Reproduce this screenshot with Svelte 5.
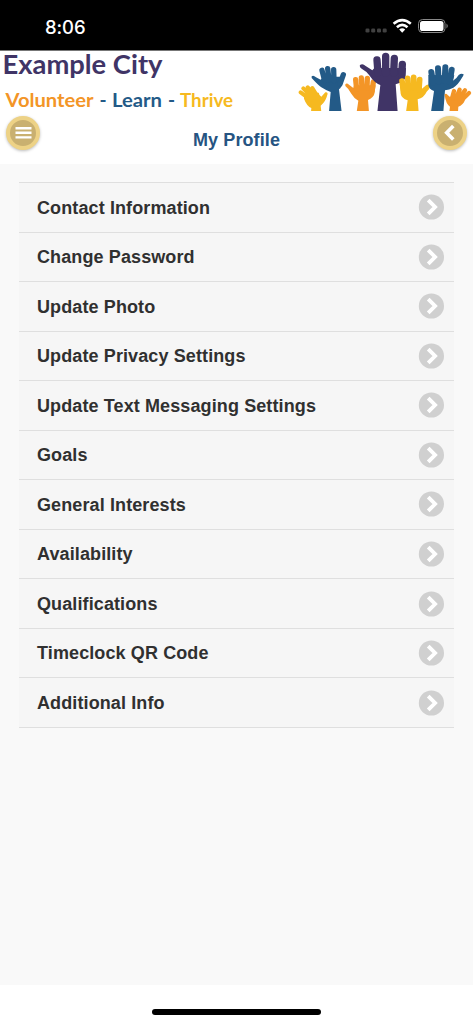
<script>
  const items = [
    'Contact Information',
    'Change Password',
    'Update Photo',
    'Update Privacy Settings',
    'Update Text Messaging Settings',
    'Goals',
    'General Interests',
    'Availability',
    'Qualifications',
    'Timeclock QR Code',
    'Additional Info'
  ];

  const hands = [
    {
      color: '#f6b920', width: 12,
      fingers: 'M14 133L44 156M22 121L50 150M35 118L58 148M49 120L66 148',
      palm: 'M24 144L40 132L68 134Q70 144 76 146L88 133Q94 132 95 137Q90 156 82 165L74 173L76 192H45L46 180Q32 174 24 152Z'
    },
    {
      color: '#235a87', width: 16,
      fingers: 'M78 67L86 98M95 62L99 95M113 65L114 98M142 80L132 108',
      palm: 'M47 85Q52 80 60 88L74 95L82 86H132L142 92L137 111Q135 120 129 124L137 192H99L104 132Q88 126 76 118Q66 111 47 90Z'
    },
    {
      color: '#f39527', width: 16,
      fingers: 'M179 95L182 124M196 90L198 120M214 91L213 120M232 102L228 130',
      palm: 'M148 109Q152 104 159 110L172 120L174 112H239L235 138Q232 149 216 156L219 192H182L187 158Q174 151 166 137Q158 122 148 114Z'
    },
    {
      color: '#403466', width: 22,
      fingers: 'M243 36L246 75M269 25L269 75M295 31L293 75M319 49L317 84',
      palm: 'M192 51Q200 45 209 54L229 67L235 60H330L328 89Q324 101 299 109L305 192H244L253 111Q235 104 221 83Q211 70 195 61Q190 57 192 51Z'
    },
    {
      color: '#f6b920', width: 17,
      fingers: 'M318 99L323 127M335 91L338 122M353 88L354 120M371 95L369 125',
      palm: 'M311 107L378 108V122L391 111Q400 107 403 113Q402 121 392 131Q384 149 365 154L368 192H330L335 157Q316 150 314 137Z'
    },
    {
      color: '#235a87', width: 18,
      fingers: 'M406 72L411 104M426 61L428 100M448 58L446 99M467 65L461 102',
      palm: 'M397 81L475 82L471 98Q481 93 488 81Q496 75 503 79Q502 86 497 91Q486 111 472 119Q459 125 447 127L442 192H405L414 129Q399 124 397 111Z'
    },
    {
      color: '#f39527', width: 13,
      fingers: 'M474 129L468 151M491 125L480 151M507 127L488 153M519 135L493 160',
      palm: 'M446 139Q450 134 455 141L463 148L469 136L507 142L506 158Q501 170 487 176L486 192H460L462 176Q450 169 446 142Z'
    }
  ];
</script>

<div class="screen">
  <div class="status">
    <span class="time">8:06</span>
    <svg class="indicators" width="84" height="20" viewBox="0 0 84 20">
      <g fill="#414141">
        <rect x="0.5" y="12.5" width="4" height="4" rx="1.3" />
        <rect x="6.2" y="12.5" width="4" height="4" rx="1.3" />
        <rect x="12" y="12.5" width="4" height="4" rx="1.3" />
        <rect x="17.7" y="12.5" width="4" height="4" rx="1.3" />
      </g>
      <g fill="none" stroke="#fff" stroke-width="2.6">
        <path d="M28.6 7.8Q37.2 0.4 45.8 7.8" />
        <path d="M31.9 11.2Q37.2 6.4 42.5 11.2" />
      </g>
      <path d="M34.2 13.6Q37.2 11 40.2 13.6L37.2 16.8Z" fill="#fff" />
      <rect x="53.5" y="3.5" width="26.5" height="13" rx="4" fill="none" stroke="#888" />
      <rect x="55" y="5" width="23.5" height="10" rx="2.6" fill="#fff" />
      <path d="M81.5 7.5Q84 10 81.5 12.5Z" fill="#888" />
    </svg>
  </div>

  <header>
    <div class="banner">
      <svg class="brand" width="240" height="60" viewBox="0 0 240 60">
        <text x="2.5" y="22.5" class="city" textLength="160" lengthAdjust="spacingAndGlyphs">Example City</text>
        <text x="5.5" y="56" class="motto orange" textLength="88" lengthAdjust="spacingAndGlyphs">Volunteer</text>
        <text x="99.5" y="56" class="motto blue">-</text>
        <text x="112" y="56" class="motto blue" textLength="50" lengthAdjust="spacingAndGlyphs">Learn</text>
        <text x="168" y="56" class="motto blue">-</text>
        <text x="180" y="56" class="motto yellow" textLength="53" lengthAdjust="spacingAndGlyphs">Thrive</text>
      </svg>
      <svg class="hands" width="175" height="60" viewBox="6 9 525 180">
        {#each hands as hand}
          <path d={hand.palm} fill={hand.color} />
          <path d={hand.fingers} fill="none" stroke={hand.color} stroke-width={hand.width} stroke-linecap="round" />
        {/each}
      </svg>
    </div>
    <div class="toolbar">
      <button class="round" aria-label="Menu">
        <svg width="25" height="25" viewBox="0 0 25 25">
          <path d="M4.5 7.2H20.5M4.5 11.8H20.5M4.5 16.4H20.5" stroke="#fff" stroke-width="2.4" />
        </svg>
      </button>
      <h1>My Profile</h1>
      <button class="round" aria-label="Back">
        <svg width="25" height="25" viewBox="0 0 25 25">
          <path d="M15.3 5L8.7 11.8L15.3 18.6" fill="none" stroke="#fff" stroke-width="3.6" />
        </svg>
      </button>
    </div>
  </header>

  <main>
    <ul>
      {#each items as item}
        <li>
          <span>{item}</span>
          <svg width="26" height="26" viewBox="0 0 26 26">
            <circle cx="13.4" cy="13" r="12.6" fill="#d0d0d0" />
            <path d="M10.2 6.1L17.1 13L10.2 19.9" fill="none" stroke="#fff" stroke-width="3.8" />
          </svg>
        </li>
      {/each}
    </ul>
  </main>

  <footer><div class="home"></div></footer>
</div>

<style>
  :global(body) { margin: 0; }
  .screen {
    width: 473px;
    height: 1024px;
    display: flex;
    flex-direction: column;
    overflow: hidden;
    background: #fff;
    font-family: "Liberation Sans", Arial, sans-serif;
  }
  .status {
    height: 50px;
    flex: none;
    box-sizing: border-box;
    padding: 16px 24px 0 45px;
    display: flex;
    justify-content: space-between;
    background: #000;
  }
  .time {
    color: #fff;
    font: 500 18.5px/22px Inter, sans-serif;
    letter-spacing: -0.1px;
  }
  .indicators { display: block; }
  header {
    height: 114px;
    flex: none;
    box-sizing: border-box;
    border-top: 1px solid #777;
    background: #fff;
  }
  .banner {
    height: 60px;
    display: flex;
    justify-content: space-between;
  }
  .brand { overflow: visible; }
  .city { font: 700 26px Lato, sans-serif; fill: #403466; }
  .motto { font: 700 19px Lato, sans-serif; }
  .orange { fill: #f39527; }
  .blue { fill: #235a87; }
  .yellow { fill: #f6b920; }
  .toolbar {
    height: 53px;
    box-sizing: border-box;
    padding: 5px 6px 0;
    display: flex;
    justify-content: space-between;
    align-items: flex-start;
  }
  h1 {
    margin: 14px 0 0;
    color: #265482;
    font-size: 18px;
    line-height: 21px;
    letter-spacing: 0.1px;
  }
  .round {
    width: 34px;
    height: 34px;
    padding: 0;
    display: grid;
    place-items: center;
    box-sizing: border-box;
    border: 4.5px solid #edd286;
    border-radius: 50%;
    background: #c9b070;
    box-shadow: 0 1px 3px #0004;
  }
  main {
    flex: 1;
    padding: 18px 19px 0;
    background: #f9f9f9;
  }
  ul {
    margin: 0;
    padding: 0;
    list-style: none;
    border-top: 1.5px solid #dfdfdf;
  }
  li {
    height: 49.54px;
    box-sizing: border-box;
    padding: 0 10px 0 18px;
    display: flex;
    align-items: center;
    justify-content: space-between;
    border-bottom: 1.5px solid #dfdfdf;
    background: #f6f6f6;
    color: #303030;
    font-size: 18px;
    font-weight: 700;
    letter-spacing: 0.11px;
  }
  li span { padding-top: 1.5px; }
  footer {
    height: 39px;
    flex: none;
    box-sizing: border-box;
    padding-top: 24px;
    background: #fff;
  }
  .home {
    width: 169px;
    height: 6px;
    margin: 0 auto;
    border-radius: 3px;
    background: #000;
  }
</style>
